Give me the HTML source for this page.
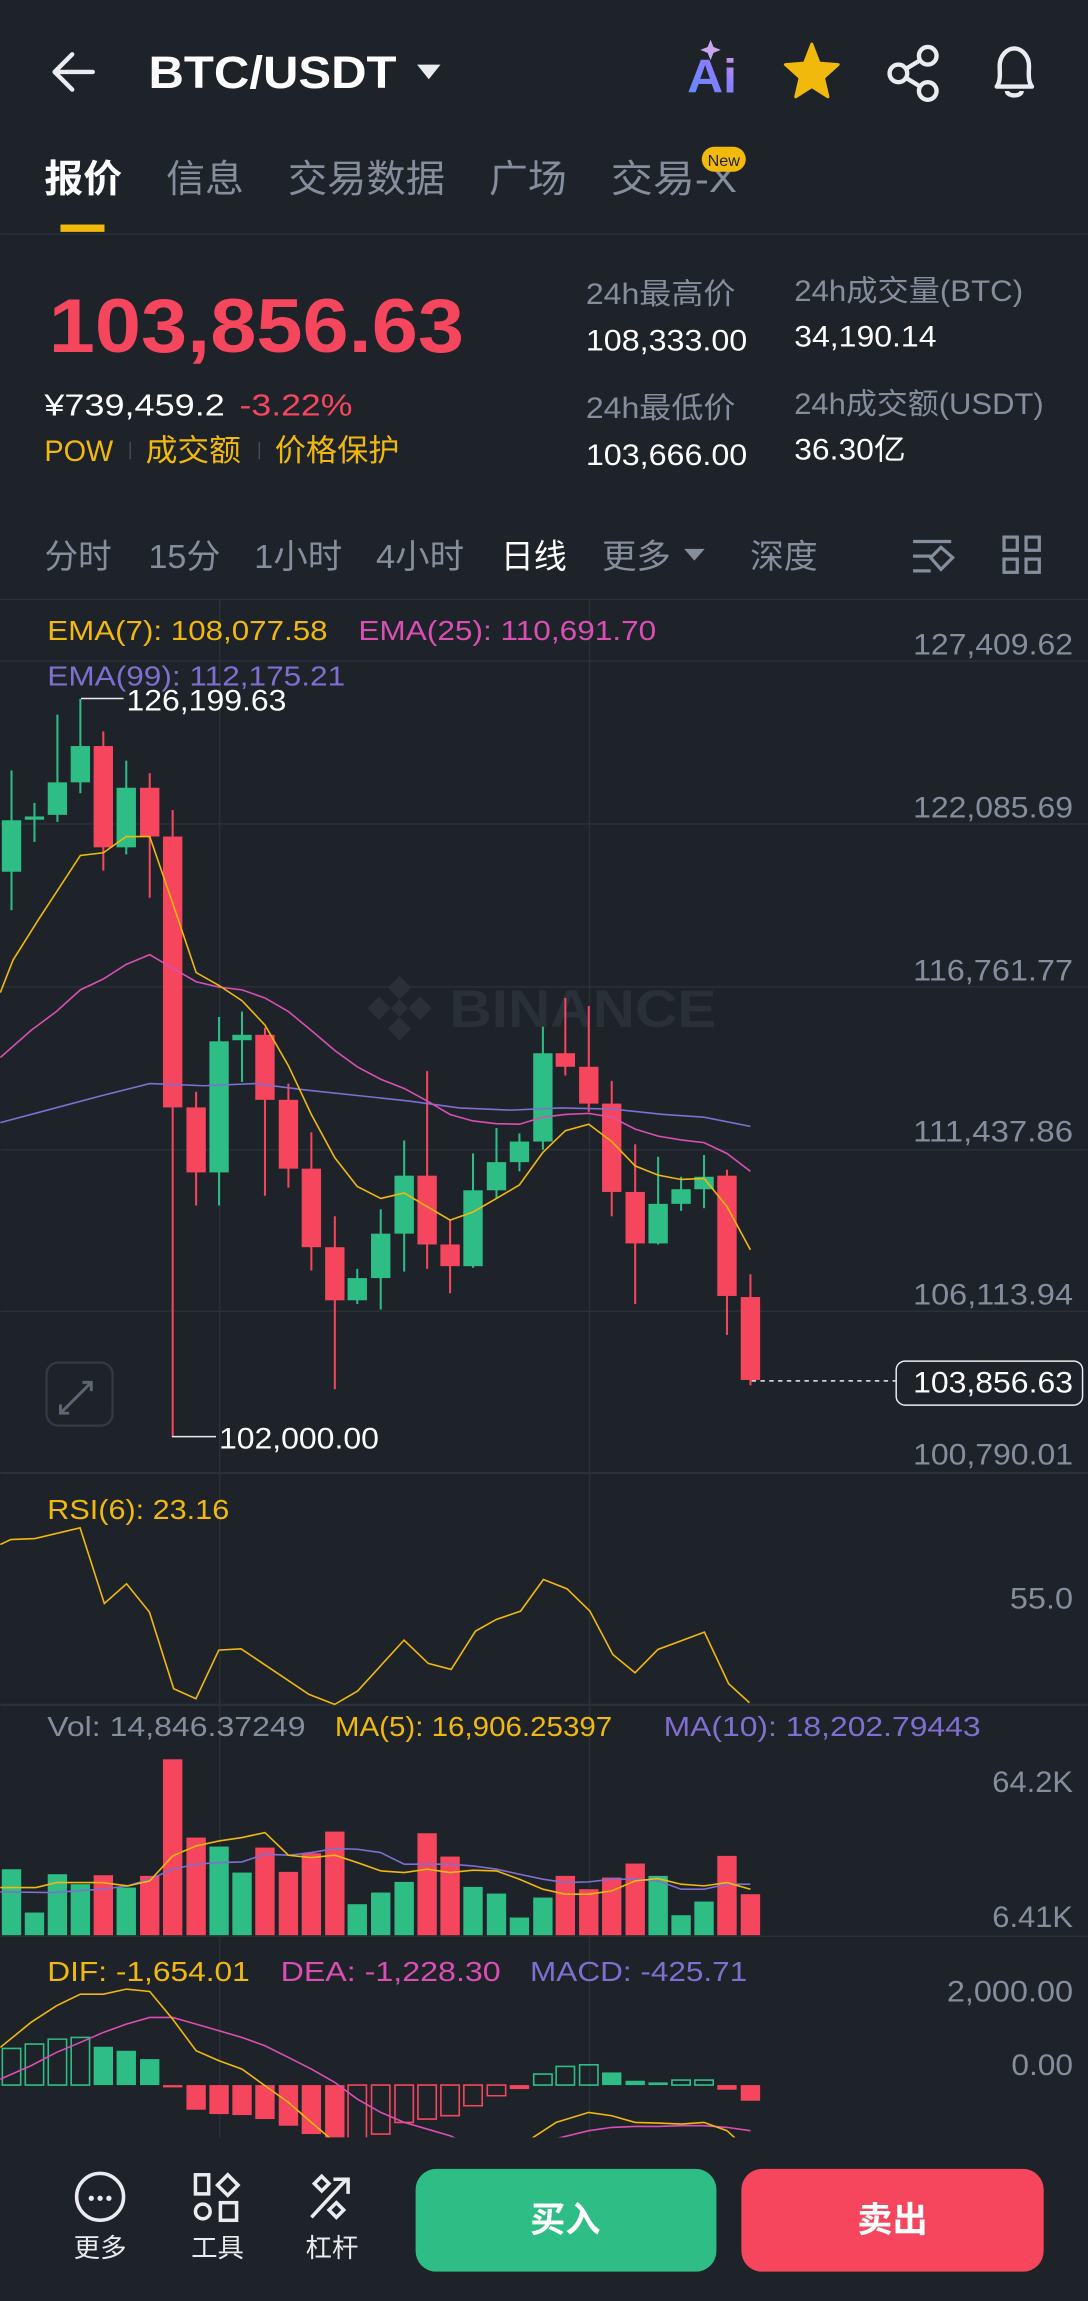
<!DOCTYPE html>
<html><head><meta charset="utf-8"><style>
html,body{margin:0;padding:0;background:#1e2229;}
svg{display:block;}
text{font-family:"Liberation Sans","Noto Sans CJK SC",sans-serif;}
</style></head><body>
<svg width="1088" height="2301" viewBox="0 0 741 1568" xmlns="http://www.w3.org/2000/svg">
<defs>
<linearGradient id="aig" x1="0" y1="1" x2="1" y2="0"><stop offset="0" stop-color="#5b8cff"/><stop offset="0.6" stop-color="#8a7dff"/><stop offset="1" stop-color="#e9a0d8"/></linearGradient>
<clipPath id="mc"><rect x="0" y="700" width="1600" height="615"/></clipPath>
</defs>
<rect width="741" height="1568" fill="#1e2229"/>

<!-- header -->
<path d="M63 49H37M37 49L49 37M37 49L49 61" stroke="#eaecef" stroke-width="3" fill="none" stroke-linecap="round" stroke-linejoin="round"/>
<text x="101" y="60" font-size="31" font-weight="bold" fill="#fff" textLength="169" lengthAdjust="spacingAndGlyphs">BTC/USDT</text>
<path d="M284 44H300L292 54Z" fill="#eaecef"/>
<text x="468" y="63" font-size="32" font-weight="bold" fill="url(#aig)" textLength="34" lengthAdjust="spacingAndGlyphs">Ai</text>
<path d="M484 27L486 32L491 34L486 36L484 41L482 36L477 34L482 32Z" fill="#c6a6f0"/>
<path d="M553 30L558 43L571 44L561 53L564 66L553 59L542 66L545 53L535 44L548 43Z" fill="#f0b90b" stroke="#f0b90b" stroke-width="2" stroke-linejoin="round"/>
<g stroke="#eaecef" stroke-width="3" fill="none"><circle cx="612" cy="50" r="6"/><circle cx="632" cy="38" r="6"/><circle cx="632" cy="62" r="6"/><path d="M617 47L627 41M617 53L627 59"/></g>
<path d="M679 59C682 55 681 49 681 45C681 38 686 33 691 33C696 33 701 38 701 45C701 49 700 55 703 59Z M686 62C686 66 696 66 696 62" stroke="#eaecef" stroke-width="3" fill="none" stroke-linejoin="round"/>

<!-- tabs -->
<g font-size="26">
<text x="30" y="131" fill="#fff" font-weight="bold" textLength="53" lengthAdjust="spacingAndGlyphs">报价</text>
<text x="113" y="131" fill="#848e9c" textLength="53" lengthAdjust="spacingAndGlyphs">信息</text>
<text x="196" y="131" fill="#848e9c" textLength="107" lengthAdjust="spacingAndGlyphs">交易数据</text>
<text x="333" y="131" fill="#848e9c" textLength="53" lengthAdjust="spacingAndGlyphs">广场</text>
<text x="416" y="131" fill="#848e9c" textLength="86" lengthAdjust="spacingAndGlyphs">交易-X</text>
</g>
<rect x="478" y="100" width="30" height="17" rx="8.5" fill="#f0b90b"/>
<text x="493" y="113" font-size="11" fill="#1e2229" text-anchor="middle">New</text>
<rect x="41" y="153" width="30" height="5" fill="#f0b90b"/>
<rect x="0" y="159" width="741" height="1" fill="#2b3139"/>

<!-- price -->
<text x="33" y="240" font-size="52" font-weight="bold" fill="#f6465d" textLength="283" lengthAdjust="spacingAndGlyphs">103,856.63</text>
<text x="30" y="283" font-size="21" fill="#fff" textLength="123" lengthAdjust="spacingAndGlyphs">¥739,459.2</text>
<text x="163" y="283" font-size="21" fill="#f6465d" textLength="77" lengthAdjust="spacingAndGlyphs">-3.22%</text>
<text x="30" y="314" font-size="20" fill="#f0b90b" textLength="47" lengthAdjust="spacingAndGlyphs">POW</text>
<rect x="88" y="301" width="1" height="12" fill="#474d57"/>
<text x="99" y="314" font-size="21" fill="#f0b90b" textLength="65" lengthAdjust="spacingAndGlyphs">成交额</text>
<rect x="176" y="301" width="1" height="12" fill="#474d57"/>
<text x="187" y="314" font-size="21" fill="#f0b90b" textLength="85" lengthAdjust="spacingAndGlyphs">价格保护</text>
<g font-size="20">
<text x="399" y="207" fill="#848e9c" textLength="102" lengthAdjust="spacingAndGlyphs">24h最高价</text>
<text x="399" y="239" fill="#fff" textLength="110" lengthAdjust="spacingAndGlyphs">108,333.00</text>
<text x="399" y="285" fill="#848e9c" textLength="102" lengthAdjust="spacingAndGlyphs">24h最低价</text>
<text x="399" y="317" fill="#fff" textLength="110" lengthAdjust="spacingAndGlyphs">103,666.00</text>
<text x="541" y="205" fill="#848e9c" textLength="156" lengthAdjust="spacingAndGlyphs">24h成交量(BTC)</text>
<text x="541" y="236" fill="#fff" textLength="97" lengthAdjust="spacingAndGlyphs">34,190.14</text>
<text x="541" y="282" fill="#848e9c" textLength="170" lengthAdjust="spacingAndGlyphs">24h成交额(USDT)</text>
<text x="541" y="313" fill="#fff" textLength="76" lengthAdjust="spacingAndGlyphs">36.30亿</text>
</g>

<!-- intervals -->
<g font-size="23" fill="#848e9c">
<text x="30" y="387" textLength="46" lengthAdjust="spacingAndGlyphs">分时</text>
<text x="101" y="387" textLength="49" lengthAdjust="spacingAndGlyphs">15分</text>
<text x="173" y="387" textLength="60" lengthAdjust="spacingAndGlyphs">1小时</text>
<text x="256" y="387" textLength="60" lengthAdjust="spacingAndGlyphs">4小时</text>
<text x="341" y="387" fill="#fff" textLength="45" lengthAdjust="spacingAndGlyphs">日线</text>
<text x="410" y="387" textLength="47" lengthAdjust="spacingAndGlyphs">更多</text>
<text x="511" y="387" textLength="46" lengthAdjust="spacingAndGlyphs">深度</text>
</g>
<path d="M466 374H480L473 382Z" fill="#848e9c"/>
<g stroke="#848e9c" stroke-width="2.2" fill="none">
<path d="M622 369H648M622 379H634M622 389H634"/><path d="M641 373L649 380L641 388L634 380Z"/>
<rect x="684" y="366" width="9" height="9"/><rect x="699" y="366" width="9" height="9"/><rect x="684" y="381" width="9" height="9"/><rect x="699" y="381" width="9" height="9"/>
</g>
<rect x="0" y="408" width="741" height="1" fill="#2b3139"/>

<!-- grid -->
<g fill="#2b3139">
<rect x="0" y="450" width="741" height="1"/><rect x="0" y="561" width="741" height="1"/><rect x="0" y="672" width="741" height="1"/><rect x="0" y="783" width="741" height="1"/><rect x="0" y="893" width="741" height="1"/>
<rect x="0" y="1003" width="741" height="1.5"/><rect x="0" y="1161" width="741" height="1.5"/><rect x="0" y="1319" width="741" height="1"/>
<rect x="149" y="409" width="1" height="1048"/><rect x="401" y="409" width="1" height="1048"/>
</g>

<!-- watermark -->
<g fill="#2a3038"><path d="M272 665L280 673L272 681L264 673Z M258 679L266 687L258 695L250 687Z M286 679L294 687L286 695L278 687Z M272 693L280 701L272 709L264 701Z M272 681L278 687L272 693L266 687Z"/></g>
<text x="306" y="700" font-size="36" font-weight="bold" fill="#2a3038" textLength="182" lengthAdjust="spacingAndGlyphs">BINANCE</text>

<!-- legends -->
<g font-size="19">
<text x="32" y="436" fill="#f0b90b" textLength="191" lengthAdjust="spacingAndGlyphs">EMA(7): 108,077.58</text>
<text x="244" y="436" fill="#d94fb4" textLength="203" lengthAdjust="spacingAndGlyphs">EMA(25): 110,691.70</text>
<text x="32" y="467" fill="#7f6fd0" textLength="203" lengthAdjust="spacingAndGlyphs">EMA(99): 112,175.21</text>
</g>
<g font-size="20" fill="#848e9c" text-anchor="end">
<text x="731" y="446" textLength="109" lengthAdjust="spacingAndGlyphs">127,409.62</text><text x="731" y="557" textLength="109" lengthAdjust="spacingAndGlyphs">122,085.69</text><text x="731" y="668" textLength="109" lengthAdjust="spacingAndGlyphs">116,761.77</text><text x="731" y="778" textLength="109" lengthAdjust="spacingAndGlyphs">111,437.86</text><text x="731" y="889" textLength="109" lengthAdjust="spacingAndGlyphs">106,113.94</text><text x="731" y="998" textLength="109" lengthAdjust="spacingAndGlyphs">100,790.01</text>
<text x="731" y="1096" textLength="43" lengthAdjust="spacingAndGlyphs">55.0</text><text x="731" y="1221" textLength="55" lengthAdjust="spacingAndGlyphs">64.2K</text><text x="731" y="1313" textLength="55" lengthAdjust="spacingAndGlyphs">6.41K</text><text x="731" y="1364" textLength="86" lengthAdjust="spacingAndGlyphs">2,000.00</text><text x="731" y="1414" textLength="42" lengthAdjust="spacingAndGlyphs">0.00</text>
</g>

<!-- candles -->
<g transform="translate(0,408.7) scale(0.3475,0.3692)">
<g fill="#2ebd85">
<rect x="20" y="315" width="4" height="258"/><rect x="3" y="407" width="38" height="95"/>
<rect x="65" y="375" width="4" height="72"/><rect x="48" y="400" width="38" height="6"/>
<rect x="110" y="212" width="4" height="198"/><rect x="93" y="337" width="38" height="60"/>
<rect x="155" y="183" width="4" height="174"/><rect x="138" y="270" width="38" height="67"/>
<rect x="245" y="297" width="4" height="173"/><rect x="228" y="347" width="38" height="110"/>
<rect x="427" y="770" width="4" height="348"/><rect x="410" y="815" width="38" height="242"/>
<rect x="472" y="760" width="4" height="130"/><rect x="455" y="803" width="38" height="10"/>
<rect x="698" y="1235" width="4" height="65"/><rect x="681" y="1252" width="38" height="41"/>
<rect x="744" y="1125" width="4" height="185"/><rect x="727" y="1170" width="38" height="82"/>
<rect x="790" y="998" width="4" height="242"/><rect x="773" y="1063" width="38" height="107"/>
<rect x="925" y="1022" width="4" height="211"/><rect x="908" y="1090" width="38" height="140"/>
<rect x="971" y="975" width="4" height="130"/><rect x="954" y="1038" width="38" height="52"/>
<rect x="1016" y="985" width="4" height="70"/><rect x="999" y="1000" width="38" height="38"/>
<rect x="1062" y="788" width="4" height="227"/><rect x="1045" y="837" width="38" height="163"/>
<rect x="1288" y="1028" width="4" height="162"/><rect x="1271" y="1115" width="38" height="73"/>
<rect x="1333" y="1065" width="4" height="63"/><rect x="1316" y="1088" width="38" height="27"/>
<rect x="1378" y="1025" width="4" height="98"/><rect x="1361" y="1065" width="38" height="23"/>
</g>
<g fill="#f6465d">
<rect x="200" y="243" width="4" height="257"/><rect x="183" y="270" width="38" height="187"/>
<rect x="291" y="320" width="4" height="230"/><rect x="274" y="347" width="38" height="90"/>
<rect x="336" y="388" width="4" height="1157"/><rect x="319" y="437" width="38" height="500"/>
<rect x="382" y="908" width="4" height="210"/><rect x="365" y="937" width="38" height="120"/>
<rect x="517" y="790" width="4" height="310"/><rect x="500" y="803" width="38" height="120"/>
<rect x="563" y="893" width="4" height="192"/><rect x="546" y="923" width="38" height="127"/>
<rect x="608" y="983" width="4" height="255"/><rect x="591" y="1050" width="38" height="145"/>
<rect x="654" y="1138" width="4" height="319"/><rect x="637" y="1195" width="38" height="98"/>
<rect x="835" y="870" width="4" height="365"/><rect x="818" y="1063" width="38" height="127"/>
<rect x="880" y="1145" width="4" height="135"/><rect x="863" y="1190" width="38" height="40"/>
<rect x="1106" y="735" width="4" height="143"/><rect x="1089" y="837" width="38" height="25"/>
<rect x="1152" y="750" width="4" height="195"/><rect x="1135" y="862" width="38" height="68"/>
<rect x="1197" y="888" width="4" height="250"/><rect x="1180" y="930" width="38" height="163"/>
<rect x="1243" y="1005" width="4" height="295"/><rect x="1226" y="1093" width="38" height="95"/>
<rect x="1423" y="1052" width="4" height="305"/><rect x="1406" y="1063" width="38" height="222"/>
<rect x="1469" y="1245" width="4" height="205"/><rect x="1452" y="1287" width="38" height="153"/>
</g>
<g fill="none" stroke-width="1.6">
<polyline vector-effect="non-scaling-stroke" stroke="#7f6fd0" points="0,965 100,940 200,915 293,893 400,897 500,893 600,905 700,915 800,925 900,938 1000,942 1100,938 1200,940 1300,950 1380,955 1471,972"/>
<polyline vector-effect="non-scaling-stroke" stroke="#d94fb4" points="0,845 60,795 110,760 157,720 202,700 247,673 293,655 338,680 384,705 429,715 474,720 519,735 565,760 610,795 656,832 700,862 746,885 792,902 837,925 882,950 927,962 973,967 1018,968 1064,955 1108,950 1154,948 1199,955 1245,977 1290,990 1335,997 1380,1002 1425,1022 1471,1055"/>
<polyline vector-effect="non-scaling-stroke" stroke="#f0b90b" points="0,725 25,665 75,590 157,472 202,467 247,437 293,437 338,560 384,688 429,712 474,740 519,785 565,860 610,950 656,1030 700,1083 746,1105 792,1095 837,1120 882,1145 927,1130 973,1105 1018,1080 1064,1020 1108,980 1154,968 1199,1000 1245,1045 1290,1062 1335,1070 1380,1068 1425,1120 1471,1200"/>
</g>
</g>

<!-- max/min labels -->
<path d="M55 476H84M117 979H147" stroke="#eaecef" stroke-width="1"/>
<text x="86" y="484" font-size="20" fill="#fff" textLength="109" lengthAdjust="spacingAndGlyphs">126,199.63</text>
<text x="149" y="987" font-size="20" fill="#fff" textLength="109" lengthAdjust="spacingAndGlyphs">102,000.00</text>
<!-- current price -->
<path d="M512 941H610" stroke="#eaecef" stroke-width="1" stroke-dasharray="3,3"/>
<rect x="610.5" y="927.5" width="127" height="30" rx="6" fill="#1e2229" stroke="#eaecef" stroke-width="1"/>
<text x="622" y="949" font-size="20" fill="#fff" textLength="109" lengthAdjust="spacingAndGlyphs">103,856.63</text>
<!-- expand -->
<rect x="31.5" y="928.5" width="45" height="43" rx="8" fill="none" stroke="#353b44" stroke-width="1.5"/>
<path d="M47 957L62 942M56 942H62V948M41 963L47 957M41 957V963H47" stroke="#5e6673" stroke-width="2" fill="none"/>

<!-- RSI -->
<text x="32" y="1035" font-size="19" fill="#f0b90b" textLength="124" lengthAdjust="spacingAndGlyphs">RSI(6): 23.16</text>
<g transform="translate(0,981) scale(0.4727,0.227)">
<polyline fill="none" stroke="#f0b90b" stroke-width="1.6" vector-effect="non-scaling-stroke" points="0,315 15,300 50,297 115,265 150,492 182,433 215,518 250,748 282,778 315,632 347,628 445,765 482,795 515,755 582,602 617,672 650,690 685,575 715,540 750,515 783,420 817,448 850,515 883,645 915,700 948,630 1015,578 1050,733 1080,790"/>
</g>

<!-- Volume -->
<g font-size="19">
<text x="32" y="1183" fill="#848e9c" textLength="176" lengthAdjust="spacingAndGlyphs">Vol: 14,846.37249</text>
<text x="228" y="1183" fill="#f0b90b" textLength="189" lengthAdjust="spacingAndGlyphs">MA(5): 16,906.25397</text>
<text x="452" y="1183" fill="#7f6fd0" textLength="216" lengthAdjust="spacingAndGlyphs">MA(10): 18,202.79443</text>
</g>
<g transform="translate(0,1158) scale(0.3475,0.227)">
<g fill="#2ebd85">
<rect x="3" y="510" width="38" height="198"/><rect x="48" y="640" width="38" height="68"/><rect x="93" y="525" width="38" height="183"/><rect x="138" y="555" width="38" height="153"/><rect x="228" y="565" width="38" height="143"/><rect x="410" y="442" width="38" height="266"/><rect x="455" y="520" width="38" height="188"/><rect x="681" y="615" width="38" height="93"/><rect x="727" y="580" width="38" height="128"/><rect x="773" y="548" width="38" height="160"/><rect x="908" y="563" width="38" height="145"/><rect x="954" y="583" width="38" height="125"/><rect x="999" y="655" width="38" height="53"/><rect x="1045" y="595" width="38" height="113"/><rect x="1271" y="530" width="38" height="178"/><rect x="1316" y="648" width="38" height="60"/><rect x="1361" y="607" width="38" height="101"/>
</g>
<g fill="#f6465d">
<rect x="183" y="528" width="38" height="180"/><rect x="274" y="530" width="38" height="178"/><rect x="319" y="180" width="38" height="528"/><rect x="365" y="415" width="38" height="293"/><rect x="500" y="445" width="38" height="263"/><rect x="546" y="518" width="38" height="190"/><rect x="591" y="462" width="38" height="246"/><rect x="637" y="397" width="38" height="311"/><rect x="818" y="402" width="38" height="306"/><rect x="863" y="472" width="38" height="236"/><rect x="1089" y="530" width="38" height="178"/><rect x="1135" y="570" width="38" height="138"/><rect x="1180" y="535" width="38" height="173"/><rect x="1226" y="493" width="38" height="215"/><rect x="1406" y="470" width="38" height="238"/><rect x="1452" y="585" width="38" height="123"/>
</g>
<polyline fill="none" stroke="#7f6fd0" stroke-width="1.6" vector-effect="non-scaling-stroke" points="0,578 100,580 200,570 250,560 293,540 338,510 384,495 429,490 474,488 519,465 565,468 610,460 656,448 700,450 746,460 792,495 837,495 882,495 927,500 973,510 1018,525 1064,540 1108,550 1154,548 1199,540 1245,540 1290,545 1335,570 1380,570 1425,555 1471,555"/>
<polyline fill="none" stroke="#f0b90b" stroke-width="1.6" vector-effect="non-scaling-stroke" points="0,565 70,565 110,550 200,550 250,560 293,545 338,470 384,440 429,425 474,415 519,400 565,468 610,475 656,468 700,490 746,515 792,520 837,510 882,520 927,513 973,515 1018,540 1064,570 1108,585 1154,585 1199,575 1245,545 1290,538 1335,555 1380,560 1425,550 1471,570"/>

<!-- MACD -->
<g clip-path="url(#mc)">
<g fill="none" stroke="#2ebd85" stroke-width="1.6">
<rect vector-effect="non-scaling-stroke" x="4" y="1048" width="36" height="110"/><rect vector-effect="non-scaling-stroke" x="49" y="1035" width="36" height="123"/><rect vector-effect="non-scaling-stroke" x="94" y="1020" width="36" height="138"/><rect vector-effect="non-scaling-stroke" x="139" y="1015" width="36" height="143"/><rect vector-effect="non-scaling-stroke" x="1046" y="1125" width="36" height="33"/><rect vector-effect="non-scaling-stroke" x="1090" y="1102" width="36" height="56"/><rect vector-effect="non-scaling-stroke" x="1136" y="1097" width="36" height="61"/><rect vector-effect="non-scaling-stroke" x="1317" y="1143" width="36" height="15"/><rect vector-effect="non-scaling-stroke" x="1362" y="1143" width="36" height="15"/>
</g>
<g fill="#2ebd85">
<rect x="183" y="1043" width="38" height="115"/><rect x="228" y="1055" width="38" height="103"/><rect x="274" y="1080" width="38" height="78"/><rect x="1180" y="1120" width="38" height="38"/><rect x="1226" y="1145" width="38" height="13"/><rect x="1271" y="1150" width="38" height="8"/>
</g>
<g fill="#f6465d">
<rect x="319" y="1158" width="38" height="7"/><rect x="365" y="1158" width="38" height="74"/><rect x="410" y="1158" width="38" height="87"/><rect x="455" y="1158" width="38" height="90"/><rect x="500" y="1158" width="38" height="102"/><rect x="546" y="1158" width="38" height="122"/><rect x="591" y="1158" width="38" height="147"/><rect x="637" y="1158" width="38" height="162"/><rect x="999" y="1158" width="38" height="12"/><rect x="1406" y="1158" width="38" height="14"/><rect x="1452" y="1158" width="38" height="47"/>
</g>
<g fill="none" stroke="#f6465d" stroke-width="1.6">
<rect vector-effect="non-scaling-stroke" x="682" y="1158" width="36" height="162"/><rect vector-effect="non-scaling-stroke" x="728" y="1158" width="36" height="147"/><rect vector-effect="non-scaling-stroke" x="774" y="1158" width="36" height="112"/><rect vector-effect="non-scaling-stroke" x="819" y="1158" width="36" height="102"/><rect vector-effect="non-scaling-stroke" x="864" y="1158" width="36" height="92"/><rect vector-effect="non-scaling-stroke" x="909" y="1158" width="36" height="62"/><rect vector-effect="non-scaling-stroke" x="955" y="1158" width="36" height="32"/>
</g>
<polyline fill="none" stroke="#d94fb4" stroke-width="1.6" vector-effect="non-scaling-stroke" points="0,1140 60,1100 110,1060 157,1030 202,1000 247,975 293,955 338,955 384,975 429,995 474,1015 519,1040 565,1075 610,1110 656,1150 700,1200 746,1240 792,1270 837,1290 882,1310 910,1330"/>
<polyline fill="none" stroke="#d94fb4" stroke-width="1.6" vector-effect="non-scaling-stroke" points="1060,1330 1154,1295 1199,1285 1245,1282 1290,1282 1335,1280 1380,1280 1425,1285 1471,1295"/>
<polyline fill="none" stroke="#f0b90b" stroke-width="1.6" vector-effect="non-scaling-stroke" points="0,1045 60,970 110,920 157,885 202,885 247,870 293,877 338,960 384,1055 429,1085 474,1110 519,1160 565,1210 610,1270 656,1330"/>
<polyline fill="none" stroke="#f0b90b" stroke-width="1.6" vector-effect="non-scaling-stroke" points="1030,1330 1090,1270 1154,1240 1199,1250 1245,1270 1290,1272 1335,1275 1380,1270 1425,1295 1450,1330"/>
</g>
</g>
<g font-size="19">
<text x="32" y="1350" fill="#f0b90b" textLength="138" lengthAdjust="spacingAndGlyphs">DIF: -1,654.01</text>
<text x="191" y="1350" fill="#d94fb4" textLength="150" lengthAdjust="spacingAndGlyphs">DEA: -1,228.30</text>
<text x="361" y="1350" fill="#7f6fd0" textLength="148" lengthAdjust="spacingAndGlyphs">MACD: -425.71</text>
</g>

<!-- bottom bar -->
<rect x="0" y="1458" width="741" height="110" fill="#1e2229"/>
<g stroke="#eaecef" stroke-width="2.4" fill="none">
<circle cx="68" cy="1497" r="16"/>
<rect x="133" y="1482" width="9" height="13"/><path d="M155 1482L162 1489L155 1496L148 1489Z"/><circle cx="138" cy="1507" r="5"/><rect x="150" y="1501" width="11" height="12"/>
<path d="M212 1511L236 1485M227 1485H237V1495"/><path d="M219 1483L224 1488L219 1493L214 1488Z"/><path d="M229 1501L234 1506L229 1511L224 1506Z"/>
</g>
<g fill="#eaecef"><circle cx="62" cy="1498" r="1.8"/><circle cx="68" cy="1498" r="1.8"/><circle cx="74" cy="1498" r="1.8"/></g>
<g font-size="18" fill="#eaecef" text-anchor="middle">
<text x="68" y="1538">更多</text><text x="148" y="1538">工具</text><text x="226" y="1538">杠杆</text>
</g>
<rect x="283" y="1478" width="205" height="70" rx="14" fill="#2ebd85"/>
<rect x="505" y="1478" width="206" height="70" rx="14" fill="#f6465d"/>
<text x="385" y="1521" font-size="24" font-weight="bold" fill="#fff" text-anchor="middle">买入</text>
<text x="608" y="1521" font-size="24" font-weight="bold" fill="#fff" text-anchor="middle">卖出</text>
</svg>
</body></html>
